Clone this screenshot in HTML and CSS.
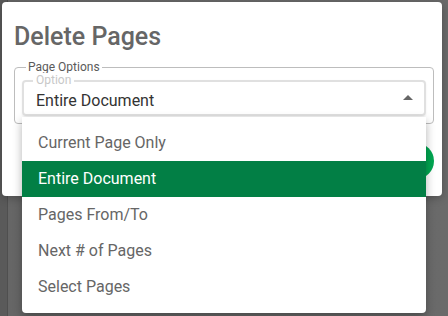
FILE: index.html
```html
<!DOCTYPE html>
<html lang="en">
<head>
    <meta charset="UTF-8">
    <title>Delete Pages</title>
    <link rel="stylesheet" href="styles.css">
</head>
<body>
    <div class="backdrop">
        <div class="dialog">
            <h1 class="dialog-title">Delete Pages</h1>
            <fieldset class="group">
                <legend>Page Options</legend>
                <div class="select">
                    <span class="select-label">Option</span>
                    <span class="select-value">Entire Document</span>
                    <span class="select-arrow"></span>
                </div>
            </fieldset>
            <div class="actions">
                <button class="round-btn"></button>
            </div>
        </div>

        <ul class="menu">
            <li>Current Page Only</li>
            <li class="selected">Entire Document</li>
            <li>Pages From/To</li>
            <li>Next # of Pages</li>
            <li>Select Pages</li>
        </ul>
    </div>
</body>
</html>
```

FILE: styles.css
```css
* { margin: 0; padding: 0; box-sizing: border-box; font-family: Roboto, 'Liberation Sans', sans-serif; }

body {
    background: #636363;
    width: 448px;
    height: 316px;
    overflow: hidden;
}

.backdrop {
    position: relative;
    height: 316px;
    padding: 2px 6px 0 2px;
    background: linear-gradient(90deg, #5a5a5a 0, #5a5a5a 7px, #4f4f4f 7px, #4f4f4f 8px, #666 8px, #6a6a6a 100%);
}

.dialog {
    background: #fff;
    border-radius: 4px;
    height: 194px;
    padding: 20px 8px 0 12px;
    box-shadow: 0 2px 8px rgba(0, 0, 0, 0.25);
}

.dialog-title {
    font-size: 25px;
    font-weight: 500;
    color: #666;
    line-height: 30px;
    margin-bottom: 8px;
}

.group {
    border: 1px solid #bdbdbd;
    border-radius: 4px;
    padding: 6px 7px 7px 7px;
}

.group legend {
    font-size: 12px;
    color: #5a5a5a;
    padding: 0 2px;
    margin-left: 4px;
    line-height: 14px;
}

.select {
    position: relative;
    border: 2px solid #e0e0e0;
    border-radius: 4px;
    height: 36px;
    padding: 0 0 0 12px;
    display: flex;
    align-items: center;
    box-shadow: 0 1px 2px rgba(0, 0, 0, 0.08);
}

.select-label {
    position: absolute;
    top: -9px;
    left: 9px;
    padding: 0 3px;
    background: #fff;
    font-size: 12px;
    color: #c8c8c8;
    line-height: 14px;
}

.select-value {
    font-size: 16px;
    color: #333;
    padding-top: 4px;
}

.select-arrow {
    position: absolute;
    right: 11px;
    top: 13px;
    width: 0;
    height: 0;
    border-left: 5px solid transparent;
    border-right: 5px solid transparent;
    border-bottom: 5px solid #666;
}

.actions {
    display: flex;
    justify-content: flex-end;
    padding: 19px 0 0 0;
}

.round-btn {
    width: 36px;
    height: 36px;
    border-radius: 50%;
    border: none;
    background: #00a651;
}

.menu {
    position: absolute;
    left: 22px;
    top: 117px;
    width: 404px;
    height: 196px;
    list-style: none;
    background: #fff;
    border-radius: 0 0 4px 4px;
    padding-top: 8px;
    box-shadow: 0 4px 10px rgba(0, 0, 0, 0.3);
}

.menu li {
    height: 36px;
    line-height: 36px;
    padding-left: 16px;
    font-size: 16px;
    color: #666;
}

.menu li.selected {
    background: #027f45;
    color: #fff;
}
```
